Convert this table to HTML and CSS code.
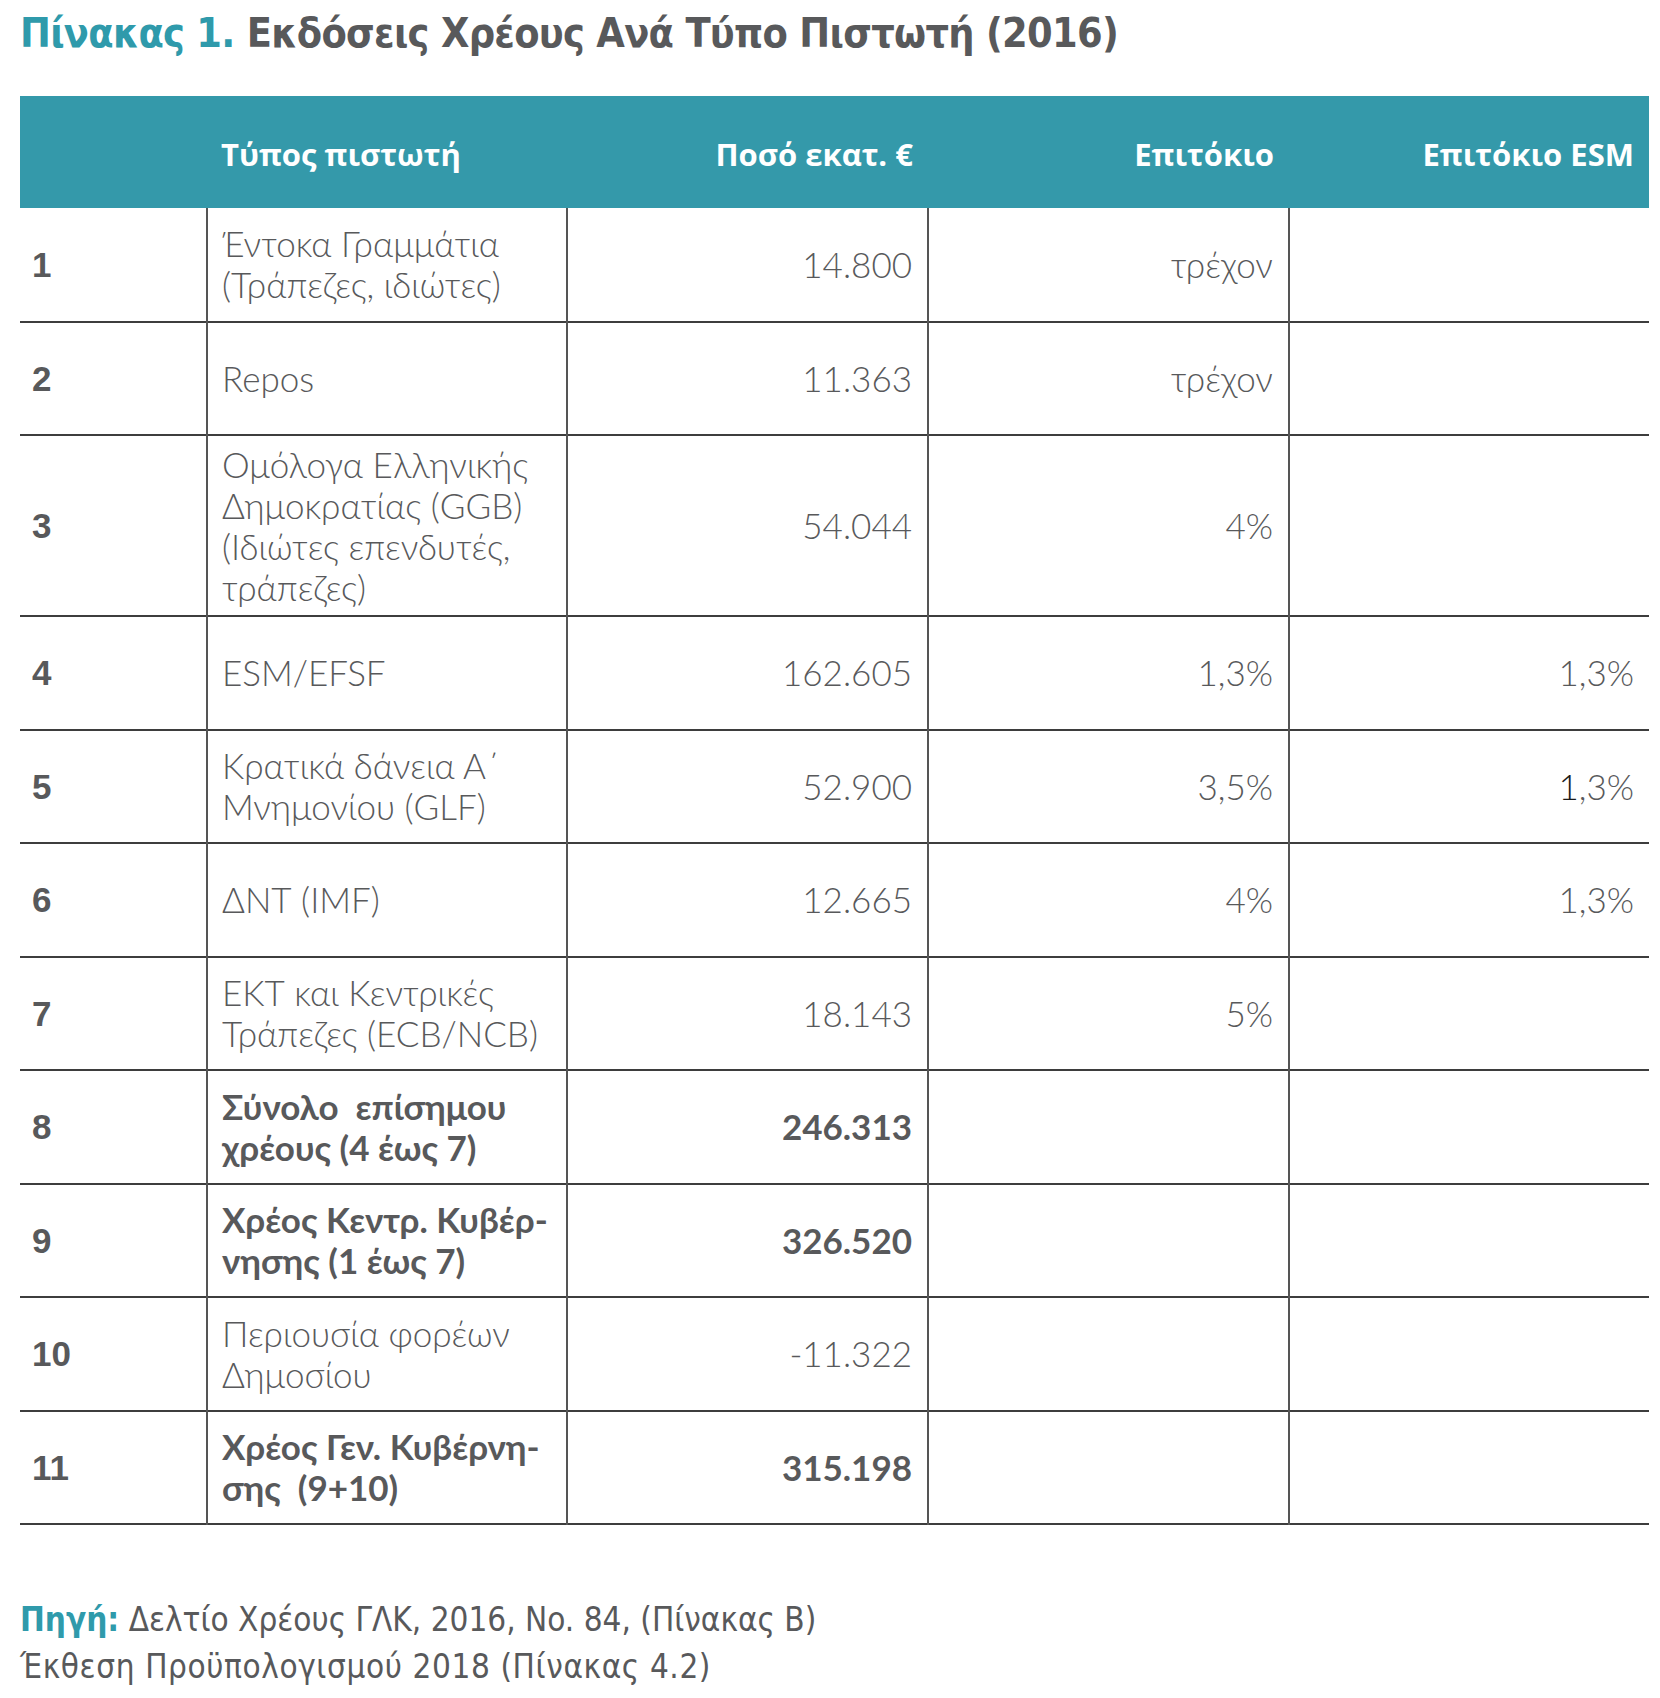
FILE: index.html
```html
<!DOCTYPE html>
<html lang="el">
<head>
<meta charset="utf-8">
<title>Πίνακας 1</title>
<link rel="stylesheet" href="styles.css">
</head>
<body>
<div class="page">
  <h1 class="title"><span class="accent">Πίνακας 1.</span> Εκδόσεις Χρέους Ανά Τύπο Πιστωτή (2016)</h1>
  <table class="debt">
    <colgroup>
      <col class="c-num"><col class="c-type"><col class="c-amt"><col class="c-rate"><col class="c-esm">
    </colgroup>
    <thead>
      <tr>
        <th></th>
        <th class="left">Τύπος πιστωτή</th>
        <th>Ποσό εκατ. €</th>
        <th>Επιτόκιο</th>
        <th>Επιτόκιο ESM</th>
      </tr>
    </thead>
    <tbody>
      <tr><td class="n">1</td><td class="t">Έντοκα Γραμμάτια<br>(Τράπεζες, ιδιώτες)</td><td class="r">14.800</td><td class="r">τρέχον</td><td class="r"></td></tr>
      <tr><td class="n">2</td><td class="t">Repos</td><td class="r">11.363</td><td class="r">τρέχον</td><td class="r"></td></tr>
      <tr class="tall"><td class="n">3</td><td class="t">Ομόλογα Ελληνικής<br>Δημοκρατίας (GGB)<br>(Ιδιώτες επενδυτές,<br>τράπεζες)</td><td class="r">54.044</td><td class="r">4%</td><td class="r"></td></tr>
      <tr><td class="n">4</td><td class="t">ESM/EFSF</td><td class="r">162.605</td><td class="r">1,3%</td><td class="r">1,3%</td></tr>
      <tr><td class="n">5</td><td class="t">Κρατικά δάνεια Α΄<br>Μνημονίου (GLF)</td><td class="r">52.900</td><td class="r">3,5%</td><td class="r"><span class="dark">1</span>,3%</td></tr>
      <tr><td class="n">6</td><td class="t">ΔΝΤ (IMF)</td><td class="r">12.665</td><td class="r">4%</td><td class="r">1,3%</td></tr>
      <tr><td class="n">7</td><td class="t">ΕΚΤ και Κεντρικές<br>Τράπεζες (ECB/NCB)</td><td class="r">18.143</td><td class="r">5%</td><td class="r"></td></tr>
      <tr class="bold"><td class="n">8</td><td class="t">Σύνολο&nbsp; επίσημου<br>χρέους (4 έως 7)</td><td class="r">246.313</td><td class="r"></td><td class="r"></td></tr>
      <tr class="bold"><td class="n">9</td><td class="t">Χρέος Κεντρ. Κυβέρ-<br>νησης (1 έως 7)</td><td class="r">326.520</td><td class="r"></td><td class="r"></td></tr>
      <tr><td class="n">10</td><td class="t">Περιουσία φορέων<br>Δημοσίου</td><td class="r">-11.322</td><td class="r"></td><td class="r"></td></tr>
      <tr class="bold"><td class="n">11</td><td class="t">Χρέος Γεν. Κυβέρνη-<br>σης&nbsp; (9+10)</td><td class="r">315.198</td><td class="r"></td><td class="r"></td></tr>
    </tbody>
  </table>
  <div class="source">
    <p><span class="accent strong">Πηγή:</span> Δελτίο Χρέους ΓΛΚ, 2016, No. 84, (Πίνακας Β)</p>
    <p class="wide">Έκθεση Προϋπολογισμού 2018 (Πίνακας 4.2)</p>
  </div>
</div>
</body>
</html>
```

FILE: styles.css
```css
html, body {
  margin: 0;
  padding: 0;
  background: #ffffff;
}

.page {
  padding: 0 11px 0 20px;
  color: #58595b;
  font-family: "Lato", "Open Sans", "Liberation Sans", sans-serif;
}

.title {
  margin: 0;
  padding-top: 9px;
  height: 96px;
  box-sizing: border-box;
  font-family: "DejaVu Sans Condensed", "Liberation Sans", sans-serif;
  font-weight: bold;
  font-size: 41px;
  line-height: 48px;
  letter-spacing: -0.7px;
  color: #58595b;
}

.accent {
  color: #2f9aab;
}

.debt {
  width: 100%;
  border-collapse: collapse;
  table-layout: fixed;
}

.c-num { width: 187px; }
.c-type { width: 360px; }
.c-amt { width: 361px; }
.c-rate { width: 361px; }
.c-esm { width: 360px; }

.debt thead tr {
  height: 112px;
  background: #3499aa;
}

.debt th {
  color: #ffffff;
  font-family: "Open Sans", "Liberation Sans", sans-serif;
  font-weight: 700;
  font-size: 31px;
  text-align: right;
  padding: 4px 15px 0 14px;
  vertical-align: middle;
}

.debt th.left {
  text-align: left;
}

.debt tbody tr {
  height: 113.5px;
  border-bottom: 2px solid #3d3d3d;
}

.debt tbody tr.tall {
  height: 181px;
}

.debt td {
  vertical-align: middle;
  font-size: 35px;
  line-height: 41px;
  font-weight: 300;
  padding: 0 15px 0 14px;
  border-left: 2px solid #555555;
  color: #58595b;
}

.debt td.n {
  border-left: none;
  font-family: "Liberation Sans", sans-serif;
  font-weight: bold;
  font-size: 35px;
  padding-left: 12px;
}

.debt td.r {
  text-align: right;
}

.debt tr.bold td.t,
.debt tr.bold td.r {
  font-weight: bold;
}

.dark {
  color: #1a1a1a;
}

.source {
  margin-top: 71px;
  font-family: "DejaVu Sans Condensed", "Liberation Sans", sans-serif;
  font-weight: 300;
  font-size: 33px;
  line-height: 47px;
  color: #58595b;
}

.source p {
  margin: 0;
}

.source .wide {
  letter-spacing: 0.6px;
}

.strong {
  font-weight: bold;
}
```
